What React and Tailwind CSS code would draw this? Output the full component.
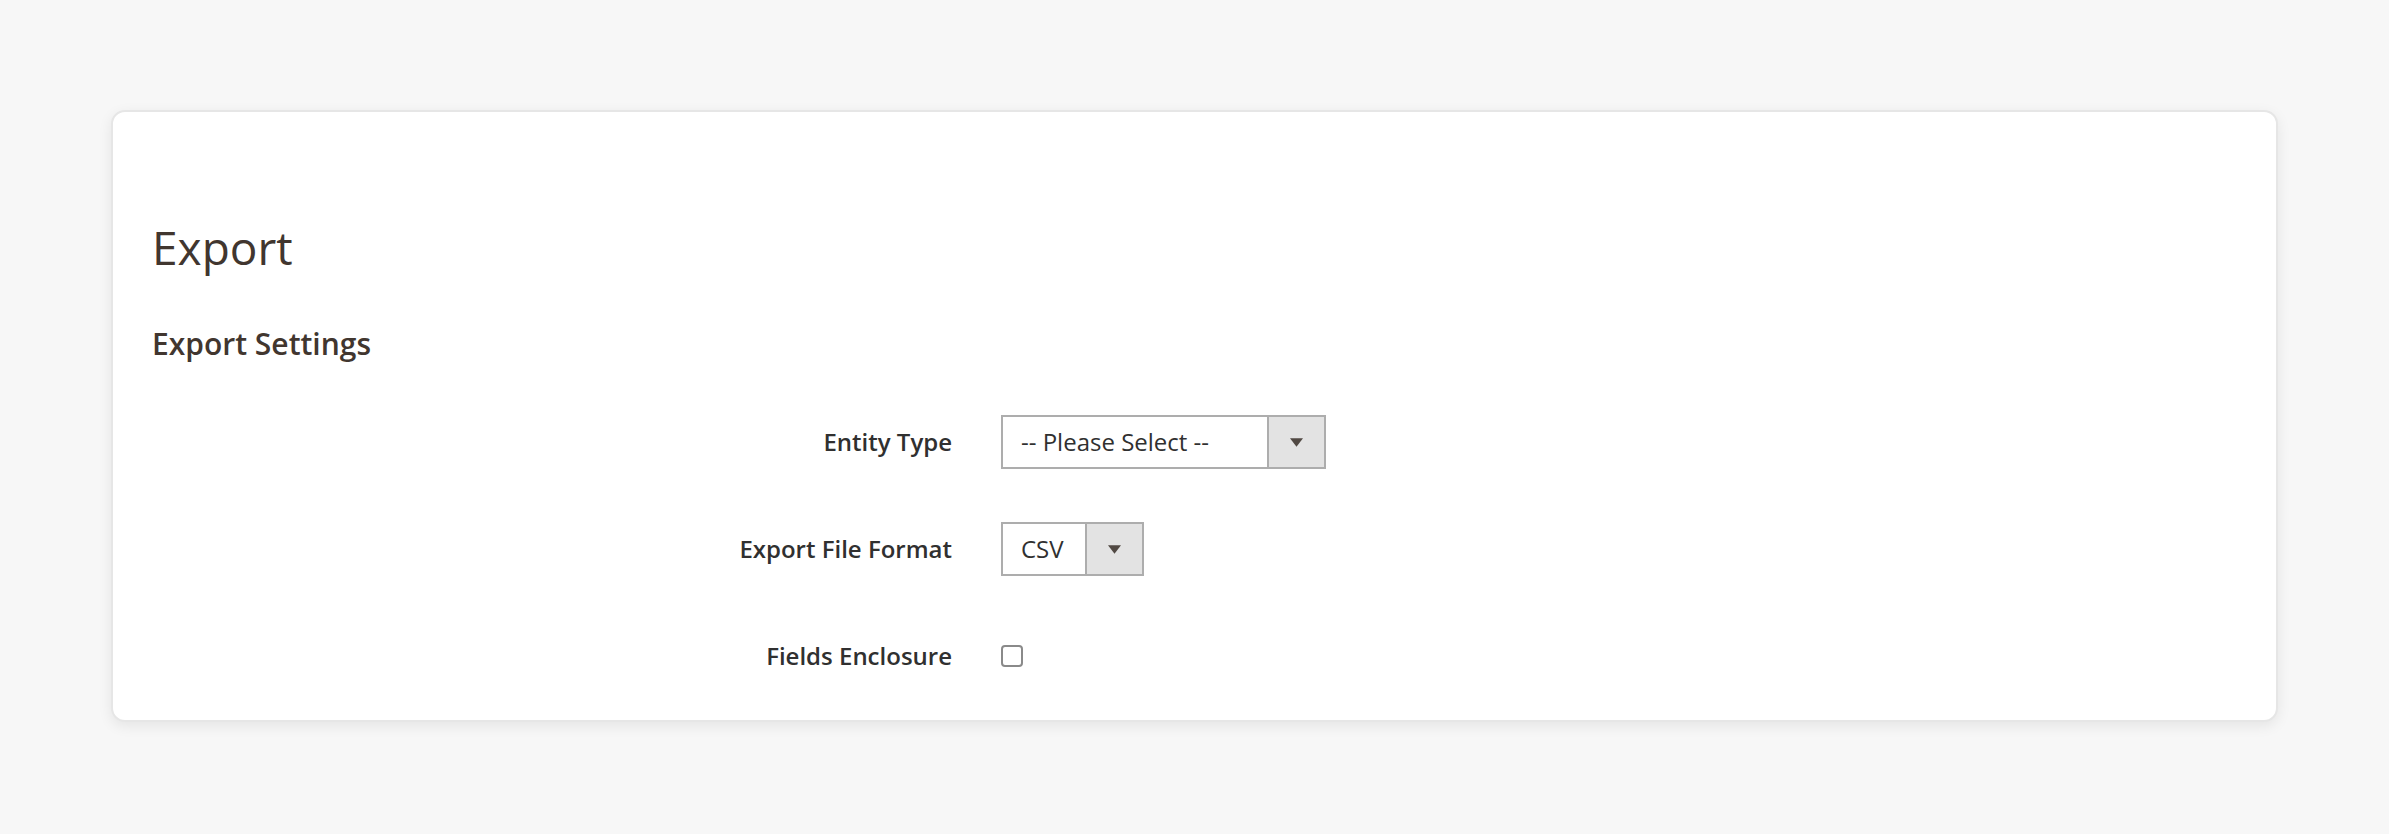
export default function App() {
  const font = { fontFamily: '"Open Sans", "Noto Sans", sans-serif' };
  const Arrow = () => (
    <svg width="13" height="9" viewBox="0 0 12 8"><path d="M0 0h12L6 8z" fill="#514943" /></svg>
  );
  return (
    <div className="w-[2389px] h-[834px] bg-[#f7f7f7] pt-[110px] pl-[111px]" style={font}>
      <div className="w-[2167px] h-[612px] bg-white border-2 border-[#e6e6e6] rounded-[14px] shadow-[0_4px_14px_rgba(0,0,0,0.08)] pl-[39px] pt-[105px] box-border">
        <h1 className="text-[46px] leading-[60px] text-[#41362f] font-normal">Export</h1>
        <h2 className="mt-[47px] text-[30px] leading-[40px] text-[#41362f] font-semibold">Export Settings</h2>
        <div className="mt-[51px] flex flex-col gap-[53px] text-[#303030]">
          <div className="flex items-center h-[54px]">
            <div className="w-[800px] text-right text-[24px] font-semibold">Entity Type</div>
            <div className="ml-[49px] flex w-[325px] h-[54px] border-2 border-[#adadad] box-border">
              <div className="flex-1 flex items-center pl-[18px] text-[24px]">-- Please Select --</div>
              <div className="w-[57px] bg-[#e3e3e3] border-l-2 border-[#adadad] flex items-center justify-center"><Arrow /></div>
            </div>
          </div>
          <div className="flex items-center h-[54px]">
            <div className="w-[800px] text-right text-[24px] font-semibold">Export File Format</div>
            <div className="ml-[49px] flex w-[143px] h-[54px] border-2 border-[#adadad] box-border">
              <div className="flex-1 flex items-center pl-[18px] text-[24px]">CSV</div>
              <div className="w-[57px] bg-[#e3e3e3] border-l-2 border-[#adadad] flex items-center justify-center"><Arrow /></div>
            </div>
          </div>
          <div className="flex items-center h-[54px]">
            <div className="w-[800px] text-right text-[24px] font-semibold">Fields Enclosure</div>
            <div className="ml-[49px] w-[22px] h-[22px] border-2 border-[#8a8a8a] rounded-[4px] bg-white" />
          </div>
        </div>
      </div>
    </div>
  );
}
